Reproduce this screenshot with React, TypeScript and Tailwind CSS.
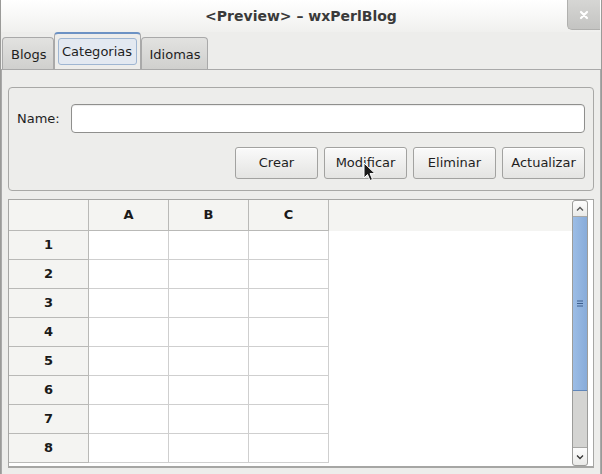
import React from 'react';

const font = { fontFamily: '"DejaVu Sans", "Liberation Sans", sans-serif' };

const cols = ['A', 'B', 'C'];
const rows = [1, 2, 3, 4, 5, 6, 7, 8];

// --- Small pieces ---
const Tab = ({ label, active = false }: { label: string; active?: boolean }) =>
  active ? (
    <div className="h-[38px] w-[87px] rounded-t-[4px] border border-b-0 border-[#a9a9a9] border-t-[2px] border-t-[#6c92c4] bg-[#ededeb] px-[3px] pt-[4px]">
      <div className="flex h-[27px] items-center justify-center rounded-[3px] border border-[#9fb6d2] bg-[#e3e9f1] text-[13px] text-[#1e1e1e]">
        {label}
      </div>
    </div>
  ) : (
    <div className="flex h-[33px] items-center justify-center rounded-t-[4px] border border-b-0 border-[#a9a9a9] bg-gradient-to-b from-[#e2e2e0] to-[#cfcfcd] pl-[8px] pr-[6px] pt-[1px] text-[13px] text-[#1e1e1e]">
      {label}
    </div>
  );

const Button = ({ label }: { label: string }) => (
  <div className="flex h-[32px] w-[83px] items-center justify-center rounded-[3px] border border-[#a2a2a0] bg-gradient-to-b from-[#fafafa] to-[#e4e4e2] text-[13px] text-[#1e1e1e] shadow-[inset_0_1px_0_#ffffff]">
    {label}
  </div>
);

const Cursor = () => (
  <svg width="14" height="20" viewBox="0 0 14 20" className="absolute left-[362px] top-[162px]">
    <path d="M1 1 L1 16 L4.5 12.5 L7 18.5 L9.5 17.4 L7 11.6 L12 11.6 Z" fill="#1a1a1a" stroke="#ffffff" strokeWidth="1" />
  </svg>
);

export default function App() {
  return (
    <div style={font} className="relative flex h-[474px] w-[602px] flex-col overflow-hidden border-x border-[#9a9a98] bg-[#ededeb]">
      {/* title bar */}
      <div className="relative flex h-[32px] shrink-0 items-center justify-center bg-gradient-to-b from-[#ffffff] to-[#f0f0ee] text-[14px] text-[#3a3a3a]">
        <span className="font-semibold">&lt;Preview&gt; – wxPerlBlog</span>
        <div className="absolute right-[1px] top-0 flex h-[30px] w-[33px] items-center justify-center rounded-bl-[5px] border-b border-l border-[#b0b0ae] bg-gradient-to-b from-[#d6d6d4] to-[#c4c4c2]">
          <svg width="10" height="10" viewBox="0 0 10 10">
            <path d="M2 2 L8 8 M8 2 L2 8" stroke="#ffffff" strokeWidth="2.2" strokeLinecap="round" />
          </svg>
        </div>
      </div>

      {/* tabs */}
      <div className="flex h-[38px] shrink-0 items-end pl-[1px]">
        <Tab label="Blogs" />
        <Tab label="Categorias" active />
        <Tab label="Idiomas" />
      </div>

      {/* notebook page */}
      <div className="relative -mt-px flex flex-1 flex-col border border-b-0 border-[#a9a9a9] px-[6px] pt-[17px]">
        {/* form group */}
        <div className="flex h-[104px] shrink-0 flex-col rounded-[4px] border border-[#a8a8a6] px-[8px] pt-[16px]">
          <div className="flex items-center gap-[11px]">
            <span className="text-[13px] text-[#1e1e1e]">Name:</span>
            <div className="h-[29px] flex-1 rounded-[4px] border border-[#8f8f8d] bg-white shadow-[inset_0_1px_1px_rgba(0,0,0,0.08)]" />
          </div>
          <div className="mt-[14px] flex justify-end gap-[6px]">
            <Button label="Crear" />
            <Button label="Modificar" />
            <Button label="Eliminar" />
            <Button label="Actualizar" />
          </div>
        </div>

        {/* grid */}
        <div className="mt-[8px] flex h-[269px] shrink-0 border border-b-2 border-[#a6a6a4] bg-white pr-[5px]">
          <div className="flex flex-1 flex-col overflow-hidden">
            <div className="flex h-[31px] shrink-0 bg-[#f4f4f2]">
              <div className="w-[80px] border-b border-r border-[#b9b9b7]" />
              {cols.map((c) => (
                <div key={c} className="flex w-[80px] items-center justify-center border-b border-r border-[#b9b9b7] text-[13px] font-bold text-[#1a1a1a]">
                  {c}
                </div>
              ))}
            </div>
            {rows.map((r) => (
              <div key={r} className="flex h-[29px] shrink-0">
                <div className="flex w-[80px] items-center justify-center border-b border-r border-[#b9b9b7] bg-[#f4f4f2] text-[13px] font-bold text-[#1a1a1a]">
                  {r}
                </div>
                {cols.map((c) => (
                  <div key={c} className="w-[80px] border-b border-r border-[#cfcfcf]" />
                ))}
              </div>
            ))}
          </div>

          {/* scrollbar */}
          <div className="flex w-[16px] shrink-0 flex-col rounded-[3px] border border-[#9c9c9a] bg-[#d4d4d2]">
            <div className="flex h-[16px] items-center justify-center rounded-t-[3px] border-b border-[#a8a8a6] bg-gradient-to-b from-[#fdfdfd] to-[#eaeae8]">
              <svg width="8" height="6" viewBox="0 0 8 6">
                <path d="M1 4.5 L4 1.5 L7 4.5" fill="none" stroke="#555" strokeWidth="1.3" />
              </svg>
            </div>
            <div className="flex h-[174px] items-center justify-center border-b border-[#5f86ba] bg-gradient-to-r from-[#9cbde6] to-[#87abd9]">
              <svg width="6" height="7" viewBox="0 0 6 7">
                <path d="M0 1 H6 M0 3.5 H6 M0 6 H6" stroke="#3d5f8e" strokeWidth="1" />
              </svg>
            </div>
            <div className="flex-1" />
            <div className="flex h-[18px] items-center justify-center rounded-b-[3px] border-t border-[#a8a8a6] bg-gradient-to-b from-[#fdfdfd] to-[#eaeae8]">
              <svg width="8" height="6" viewBox="0 0 8 6">
                <path d="M1 1.5 L4 4.5 L7 1.5" fill="none" stroke="#333" strokeWidth="1.3" />
              </svg>
            </div>
          </div>
        </div>
      </div>

      <Cursor />
    </div>
  );
}
